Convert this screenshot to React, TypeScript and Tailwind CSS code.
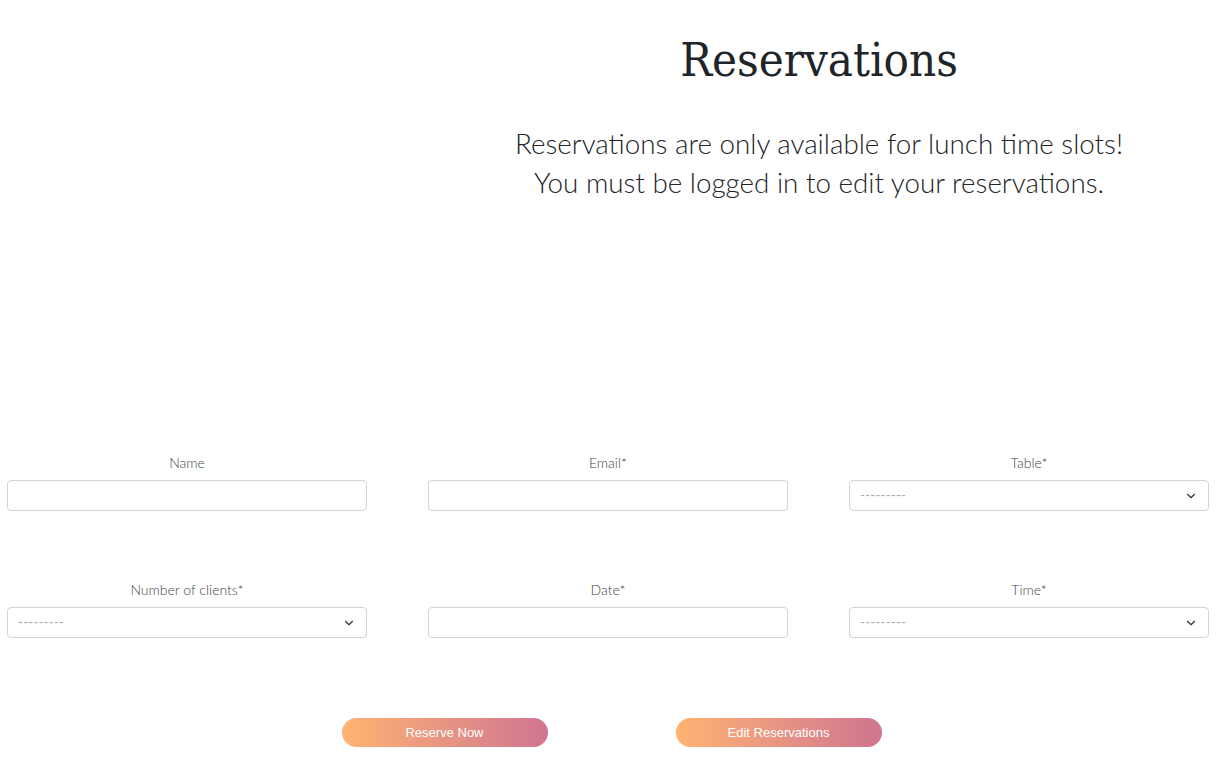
import React from 'react';
import { ChevronDown } from 'lucide-react';

const body = { fontFamily: 'Lato, "Noto Sans", sans-serif' };

type Field = { label: string; kind: 'input' | 'select' };

const rows: Field[][] = [
  [
    { label: 'Name', kind: 'input' },
    { label: 'Email*', kind: 'input' },
    { label: 'Table*', kind: 'select' },
  ],
  [
    { label: 'Number of clients*', kind: 'select' },
    { label: 'Date*', kind: 'input' },
    { label: 'Time*', kind: 'select' },
  ],
];

const FormField: React.FC<Field> = ({ label, kind }) => (
  <div className="flex flex-col items-center">
    <label className="text-[14px] leading-[18px] text-[#444] font-light mb-[8px]">{label}</label>
    {kind === 'input' ? (
      <input
        type="text"
        className="w-full h-[31px] bg-white border border-[#ced4da] rounded-[4px] px-3 text-sm focus:outline-none"
      />
    ) : (
      <div className="w-full h-[31px] bg-white border border-[#ced4da] rounded-[4px] pl-[10px] pr-[10px] flex items-center justify-between">
        <span className="text-[13px] text-[#aaa] tracking-[0.3px]">---------</span>
        <ChevronDown className="w-[14px] h-[14px] text-[#333]" strokeWidth={2} />
      </div>
    )}
  </div>
);

export default function App() {
  return (
    <div className="w-[1223px] h-[765px] bg-white overflow-hidden" style={body}>
      <div className="flex">
        <div className="w-[415px] shrink-0" />
        <div className="flex-1 flex flex-col items-center pt-[30px]">
          <h1
            className="text-[47px] leading-[60px] text-[#212529] font-normal"
            style={{ fontFamily: '"DejaVu Serif Condensed", "DejaVu Serif", serif', fontStretch: 'condensed' }}
          >
            Reservations
          </h1>
          <div className="mt-[34px] text-center text-[27.8px] leading-[39px] text-[#212529] font-light">
            <p>Reservations are only available for lunch time slots!</p>
            <p>You must be logged in to edit your reservations.</p>
          </div>
        </div>
      </div>

      <div className="pl-[7px] mt-[252px] flex flex-col gap-[70px]">
        {rows.map((r, i) => (
          <div key={i} className="grid grid-cols-[360px_360px_360px] gap-x-[61px]">
            {r.map(f => (
              <FormField key={f.label} {...f} />
            ))}
          </div>
        ))}
      </div>

      <div className="flex justify-center gap-[128px] mt-[80px]">
        {['Reserve Now', 'Edit Reservations'].map(t => (
          <button
            key={t}
            className="w-[206px] h-[29px] rounded-full text-white text-[13px] bg-gradient-to-r from-[#ffb370] to-[#cf758f]"
            style={{ fontFamily: '"Liberation Sans", Arial, sans-serif' }}
          >
            {t}
          </button>
        ))}
      </div>
    </div>
  );
}
